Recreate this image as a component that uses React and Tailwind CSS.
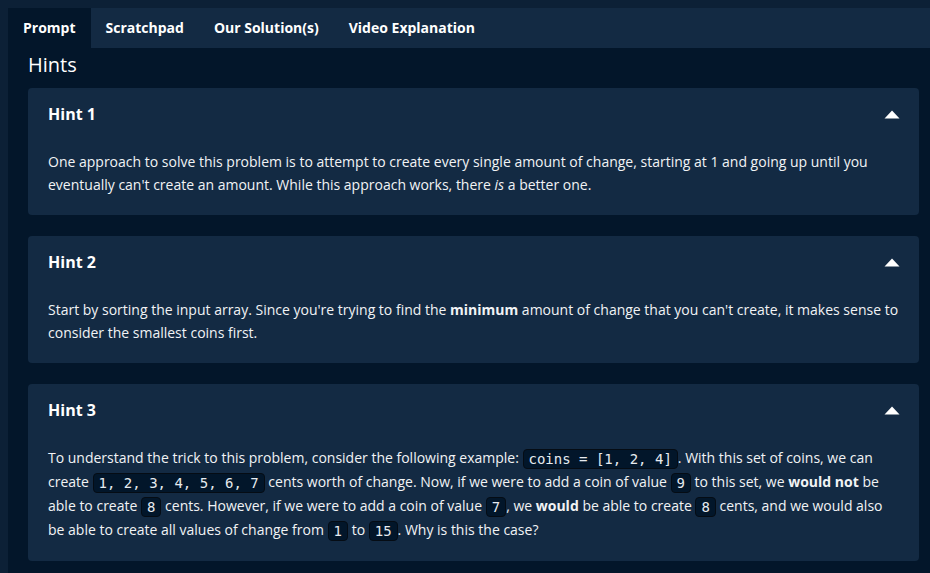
import React from "react";

const tabs = ["Prompt", "Scratchpad", "Our Solution(s)", "Video Explanation"];

// inline code chip used inside the hint text
const Code = ({ children }) => (
  <code className="inline-block rounded-[4px] border border-[#050c14] bg-[#02162a] px-[5px] py-px align-middle font-['DejaVu_Sans_Mono',monospace] text-[14px] leading-[16px] text-[#e6ebf0]">
    {children}
  </code>
);

const Hint = ({ title, children }) => (
  <div className="rounded-[4px] bg-[#132a43]">
    <div className="flex items-center justify-between px-5 py-[14px]">
      <h3 className="text-[16px] font-bold leading-6 text-white">{title}</h3>
      <svg width="16" height="9" viewBox="0 0 16 9" className="mr-[-1px]">
        <path d="M8 0.5 L15.5 8.5 L0.5 8.5 Z" fill="#ffffff" strokeLinejoin="round" />
      </svg>
    </div>
    <div className="px-5 pb-[19px] pt-[10px] text-[14px] leading-[23px] text-[#f1f3f5]">
      {children}
    </div>
  </div>
);

export default function App() {
  return (
    <div className="h-[573px] overflow-hidden bg-[#0c2036] pl-2 pt-2 font-['Open_Sans',sans-serif]">
      <div className="h-full bg-[#03162a]">
        {/* tabs */}
        <div className="flex h-10 bg-[#132a43]">
          {tabs.map((t, i) => (
            <div
              key={t}
              className={
                "flex items-center px-[15px] pb-[2px] text-[14px] font-bold text-white " +
                (i === 0 ? "bg-[#03162a]" : "")
              }
            >
              {t}
            </div>
          ))}
        </div>

        <div className="pl-5 pr-[11px]">
          <h2 className="pt-[3px] text-[20px] leading-7 text-white">Hints</h2>

          <div className="mt-[9px] flex flex-col gap-[21px]">
            <Hint title="Hint 1">
              One approach to solve this problem is to attempt to create every single amount of change, starting at 1 and going up until you
              eventually can't create an amount. While this approach works, there <em>is</em> a better one.
            </Hint>

            <Hint title="Hint 2">
              Start by sorting the input array. Since you're trying to find the <strong>minimum</strong> amount of change that you can't create, it
              makes sense to consider the smallest coins first.
            </Hint>

            <Hint title="Hint 3">
              <p className="leading-6">
                To understand the trick to this problem, consider the following example: <Code>coins = [1, 2, 4]</Code>. With this set of coins, we can
                create <Code>1, 2, 3, 4, 5, 6, 7</Code> cents worth of change. Now, if we were to add a coin of value <Code>9</Code> to this set, we{" "}
                <strong>would not</strong> be able to create <Code>8</Code> cents. However, if we were to add a coin of value <Code>7</Code>, we{" "}
                <strong>would</strong> be able to create <Code>8</Code> cents, and we would also be able to create all values of change from{" "}
                <Code>1</Code> to <Code>15</Code>. Why is this the case?
              </p>
            </Hint>
          </div>
        </div>
      </div>
    </div>
  );
}
